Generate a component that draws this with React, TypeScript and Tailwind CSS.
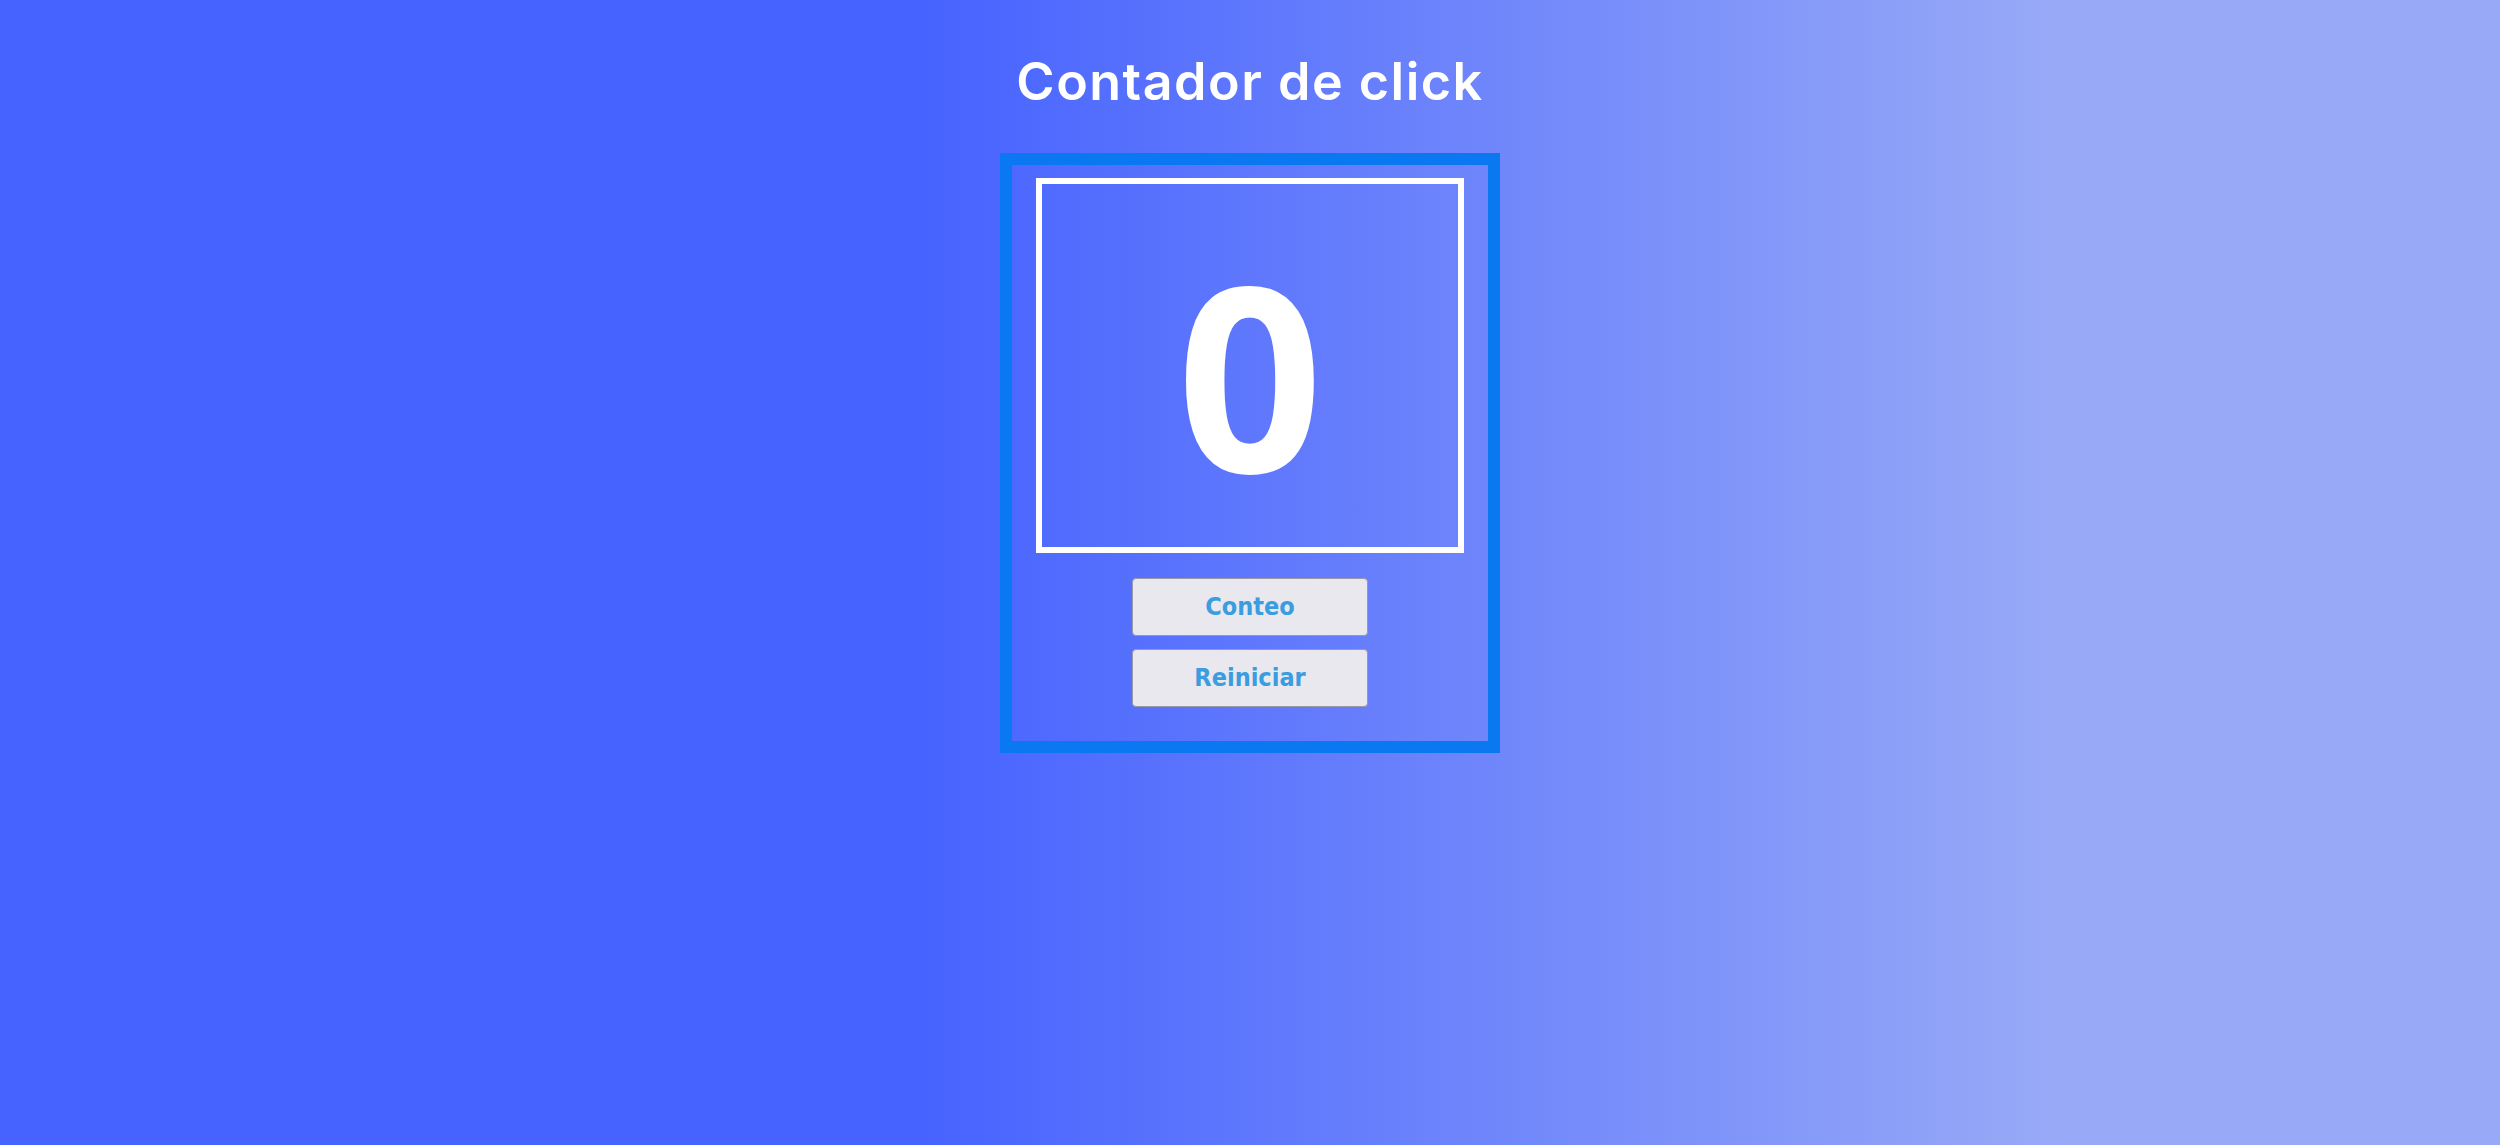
import { useState } from "react";

const App = () => {
    const [count, setCount] = useState(0);

    return (
        <div className="min-h-[1145px] w-full flex flex-col items-center bg-[linear-gradient(90deg,#4763ff_37%,#97a9f7_82%)]">
            <h1 className="mt-[50px] text-[52px] leading-[64px] font-semibold text-white tracking-[1.5px] font-['Inter',sans-serif]">
                Contador de click
            </h1>
            <div className="mt-[39px] w-[500px] h-[600px] border-[12px] border-[#0a78f0] flex flex-col items-center">
                <div className="mt-[13px] w-[428px] h-[375px] border-[6px] border-white flex items-center justify-center">
                    <span className="text-[256px] leading-none font-bold text-white pt-[14px] font-['Open_Sans',sans-serif]">
                        {count}
                    </span>
                </div>
                <div className="mt-[25px] flex flex-col gap-[13px]">
                    <button
                        className="w-[236px] h-[58px] bg-[#e9e8ee] border border-[#9a9aa6] rounded-[4px] text-[#3a9ddf] text-[25px] font-bold font-['DejaVu_Sans_Condensed','DejaVu_Sans',sans-serif]"
                        onClick={() => setCount(count + 1)}
                    >
                        Conteo
                    </button>
                    <button
                        className="w-[236px] h-[58px] bg-[#e9e8ee] border border-[#9a9aa6] rounded-[4px] text-[#3a9ddf] text-[25px] font-bold font-['DejaVu_Sans_Condensed','DejaVu_Sans',sans-serif]"
                        onClick={() => setCount(0)}
                    >
                        Reiniciar
                    </button>
                </div>
            </div>
        </div>
    )
}

export default App
